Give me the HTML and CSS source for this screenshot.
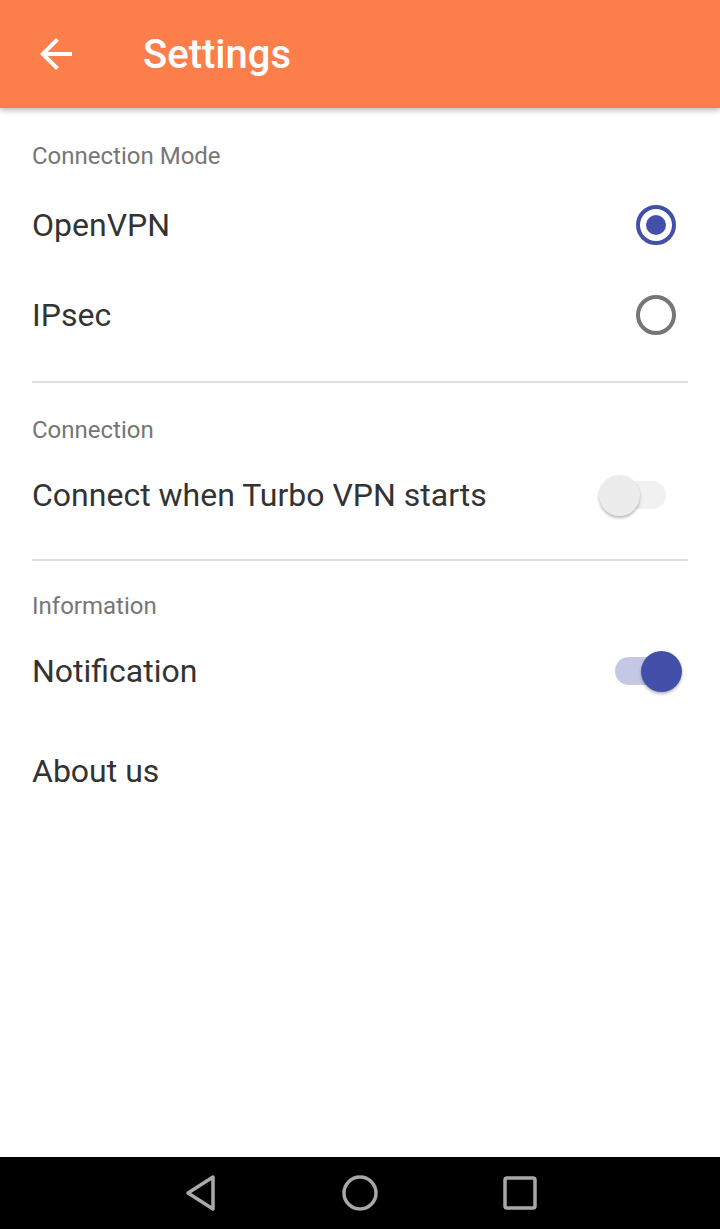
FILE: index.html
```html
<!DOCTYPE html>
<html lang="en">
<head>
<meta charset="UTF-8">
<meta name="viewport" content="width=device-width, initial-scale=1.0">
<title>Settings</title>
<link rel="stylesheet" href="styles.css">
</head>
<body>

<!-- Toolbar -->
<header class="appbar">
  <span class="appbar-back">
    <svg viewBox="0 0 24 24" width="48" height="48"><path fill="#fff" d="M20 11H7.83l5.59-5.59L12 4l-8 8 8 8 1.41-1.41L7.83 13H20v-2z"/></svg>
  </span>
  <h1 class="appbar-title">Settings</h1>
</header>

<main class="content">

  <!-- Connection mode -->
  <section class="group group-mode">
    <div class="group-label">Connection Mode</div>
    <div class="row">
      <span class="row-text">OpenVPN</span>
      <span class="radio radio-on"></span>
    </div>
    <div class="row">
      <span class="row-text">IPsec</span>
      <span class="radio"></span>
    </div>
  </section>

  <div class="divider"></div>

  <!-- Connection -->
  <section class="group">
    <div class="group-label">Connection</div>
    <div class="row">
      <span class="row-text">Connect when Turbo VPN starts</span>
      <span class="switch switch-off"><span class="switch-track"></span><span class="switch-thumb"></span></span>
    </div>
  </section>

  <div class="divider"></div>

  <!-- Information -->
  <section class="group group-info">
    <div class="group-label">Information</div>
    <div class="row">
      <span class="row-text">Notification</span>
      <span class="switch switch-on"><span class="switch-track"></span><span class="switch-thumb"></span></span>
    </div>
    <div class="row row-plain">
      <span class="row-text">About us</span>
    </div>
  </section>

</main>

<!-- System navigation -->
<nav class="navbar">
  <svg width="40" height="40" viewBox="0 0 40 40"><path d="M33 4 L8 20 L33 36 Z" fill="none" stroke="#a8a8a8" stroke-width="3.5" stroke-linejoin="round"/></svg>
  <svg width="40" height="40" viewBox="0 0 40 40"><circle cx="20" cy="20" r="16" fill="none" stroke="#a8a8a8" stroke-width="3.5"/></svg>
  <svg width="40" height="40" viewBox="0 0 40 40"><rect x="5" y="5" width="30" height="30" rx="2" fill="none" stroke="#a8a8a8" stroke-width="3.5"/></svg>
</nav>

</body>
</html>
```

FILE: styles.css
```css
/* Page */
html, body {
  margin: 0;
  height: 100%;
}

body {
  display: flex;
  flex-direction: column;
  background: #fff;
  font-family: Roboto, "Noto Sans", sans-serif;
  color: #333;
}

/* Toolbar */
.appbar {
  position: relative;
  z-index: 1;
  display: flex;
  align-items: center;
  height: 108px;
  padding-left: 32px;
  background-color: #fc7e4a;
  box-shadow: 0 2px 6px rgba(0,0,0,0.3);
}

.appbar-back {
  display: flex;
  width: 48px;
  height: 48px;
}

.appbar-title {
  margin: 0 0 0 63px;
  color: #fff;
  font-size: 40px;
  font-weight: 500;
}

/* Content */
.content {
  flex: 1;
}

.group {
  padding-top: 27px;
}

.group-label {
  height: 40px;
  line-height: 40px;
  padding-left: 32px;
  color: #767676;
  font-size: 24px;
}

.group-mode {
  padding-top: 28px;
  padding-bottom: 2px;
}

.group-mode .group-label {
  margin-bottom: 4px;
}

.group-info {
  padding-top: 25px;
}

.row {
  display: flex;
  align-items: center;
  justify-content: space-between;
  height: 90px;
  padding: 0 44px 0 32px;
}

.row-text {
  font-size: 32px;
}

.row-plain {
  margin-top: 10px;
}

.divider {
  height: 2px;
  margin: 19px 32px 0;
  background-color: #dedede;
}

/* Radio buttons */
.radio {
  box-sizing: border-box;
  width: 40px;
  height: 40px;
  border: 4px solid #767676;
  border-radius: 50%;
}

.radio-on {
  display: flex;
  align-items: center;
  justify-content: center;
  border-color: #4350a9;
}

.radio-on::after {
  content: "";
  width: 20px;
  height: 20px;
  border-radius: 50%;
  background-color: #4350a9;
}

/* Switches */
.switch {
  position: relative;
  display: flex;
  align-items: center;
  width: 67px;
  height: 41px;
}

.switch-track {
  width: 58px;
  height: 28px;
  border-radius: 14px;
}

.switch-thumb {
  position: absolute;
  top: 0;
  width: 41px;
  height: 41px;
  border-radius: 50%;
  box-shadow: 0 2px 3px rgba(0,0,0,0.28);
}

.switch-off {
  justify-content: flex-end;
  margin-right: 10px;
}

.switch-off .switch-track {
  background-color: #f1f1f1;
}

.switch-off .switch-thumb {
  left: 0;
  background-color: #ececec;
}

.switch-on {
  justify-content: flex-start;
  margin-right: -6px;
}

.switch-on .switch-track {
  background-color: #c5c8e5;
}

.switch-on .switch-thumb {
  right: 0;
  background-color: #4350a9;
}

/* System navigation */
.navbar {
  display: flex;
  align-items: center;
  justify-content: center;
  gap: 120px;
  height: 72px;
  background-color: #000;
}
```
